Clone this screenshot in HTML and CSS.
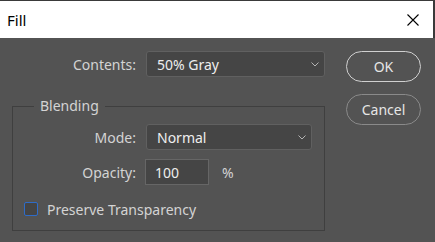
FILE: index.html
```html
<!DOCTYPE html>
<html lang="en">
<head>
    <meta charset="UTF-8">
    <meta name="viewport" content="width=device-width, initial-scale=1.0">
    <title>Fill</title>
    <link rel="stylesheet" href="styles.css">
</head>
<body>
    <div class="window">
        <div class="titlebar">
            <span class="title">Fill</span>
            <svg class="close" width="12" height="12" viewBox="0 0 12 12">
                <path d="M0.5 0.5 L11.5 11.5 M11.5 0.5 L0.5 11.5" stroke="#000" stroke-width="1.1" fill="none"/>
            </svg>
        </div>

        <div class="content">
            <div class="form">
                <div class="row">
                    <label class="label">Contents:</label>
                    <div class="dropdown wide">
                        <span>50% Gray</span>
                        <svg class="chevron" width="8" height="5" viewBox="0 0 8 5">
                            <polyline points="0.5,0.5 4,4 7.5,0.5" stroke="#b4b4b4" stroke-width="1" fill="none"/>
                        </svg>
                    </div>
                </div>

                <fieldset class="group">
                    <legend>Blending</legend>
                    <div class="row">
                        <label class="label">Mode:</label>
                        <div class="dropdown mode">
                            <span>Normal</span>
                            <svg class="chevron" width="8" height="5" viewBox="0 0 8 5">
                                <polyline points="0.5,0.5 4,4 7.5,0.5" stroke="#b4b4b4" stroke-width="1" fill="none"/>
                            </svg>
                        </div>
                    </div>
                    <div class="row opacity-row">
                        <label class="label" for="opacity">Opacity:</label>
                        <input type="text" id="opacity" class="number" value="100">
                        <span class="unit">%</span>
                    </div>
                    <label class="check-row">
                        <input type="checkbox" class="check">
                        <span>Preserve Transparency</span>
                    </label>
                </fieldset>
            </div>

            <div class="buttons">
                <button class="btn primary">OK</button>
                <button class="btn">Cancel</button>
            </div>
        </div>
    </div>
</body>
</html>
```

FILE: styles.css
```css
* {
    box-sizing: border-box;
}
body {
    margin: 0;
    padding: 0;
    background-color: #535353;
    font-family: "Noto Sans", "Open Sans", sans-serif;
    font-size: 14px;
    color: #d4d4d4;
}
.window {
    width: 435px;
    height: 242px;
    background-color: #535353;
}
.titlebar {
    height: 38px;
    background-color: #ffffff;
    border-top: 1px solid #3a3a3a;
    border-right: 2px solid #3a3a3a;
    display: flex;
    align-items: center;
    justify-content: space-between;
    padding: 0 14px 0 7px;
}
.title {
    color: #000;
    font-size: 15px;
}
.close {
    display: block;
}
.content {
    display: flex;
    padding: 13px 0 0 12px;
}
.form {
    width: 313px;
}
.row {
    display: flex;
    align-items: center;
    height: 26px;
}
.label {
    width: 124px;
    margin-right: 10px;
    text-align: right;
}
.group .label {
    width: 123px;
}
.dropdown {
    height: 26px;
    background-color: #454545;
    border: 1px solid #606060;
    border-radius: 3px;
    display: flex;
    align-items: center;
    justify-content: space-between;
    padding: 0 5px 0 10px;
    color: #eeeeee;
}
.dropdown.wide {
    flex: 1;
}
.dropdown.mode {
    width: 166px;
}
.chevron {
    display: block;
}
.group {
    margin: 19px 0 0;
    padding: 8px 0 11px 0;
    border: 1px solid #3f3f3f;
    height: 135px;
}
.group legend {
    margin-left: 21px;
    padding: 0 6px;
    line-height: 20px;
}
.opacity-row {
    margin-top: 9px;
}
.number {
    width: 64px;
    height: 26px;
    background-color: #454545;
    border: 1px solid #666666;
    color: #eeeeee;
    font-family: inherit;
    font-size: 14px;
    padding: 0 9px;
    margin-left: -1px;
    outline: none;
}
.unit {
    margin-left: 13px;
}
.check-row {
    display: flex;
    align-items: center;
    height: 20px;
    margin-top: 14px;
    padding-left: 11px;
}
.check {
    appearance: none;
    width: 14px;
    height: 14px;
    margin: 0 9px 0 0;
    background-color: #454545;
    border: 1px solid #2f6cc8;
    border-radius: 2px;
}
.buttons {
    display: flex;
    flex-direction: column;
    gap: 12px;
    margin-left: 21px;
}
.btn {
    width: 75px;
    height: 31px;
    border-radius: 16px;
    background-color: #535353;
    border: 1px solid #8a8a8a;
    color: #e6e6e6;
    font-family: inherit;
    font-size: 14px;
    padding: 0;
}
.btn.primary {
    border-color: #d0d0d0;
}
```
